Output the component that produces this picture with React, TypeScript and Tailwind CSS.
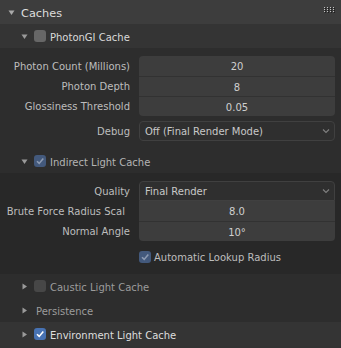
import React from 'react';

type Check = 'off' | 'dim' | 'on' | 'dark';

const Tri = ({ open, className = '' }: { open: boolean; className?: string }) => (
  <svg width="7" height="7" viewBox="0 0 7 7" className={className}>
    {open ? <path d="M0.5 1.5 L6.5 1.5 L3.5 6 Z" fill="currentColor" /> : <path d="M1.5 0.5 L6 3.5 L1.5 6.5 Z" fill="currentColor" />}
  </svg>
);

const Box = ({ state }: { state: Check }) => {
  const bg = {
    off: 'bg-[#676767]',
    dim: 'bg-[#43597c]',
    on: 'bg-[#4772b3]',
    dark: 'bg-[#474747]',
  }[state];
  return (
    <div className={`w-[12px] h-[12px] rounded-[3px] flex items-center justify-center ${bg}`}>
      {(state === 'dim' || state === 'on') && (
        <svg width="10" height="10" viewBox="0 0 10 10">
          <path d="M2 5.2 L4.2 7.4 L8.3 2.6" fill="none" stroke={state === 'on' ? '#ffffff' : '#8d9bb2'} strokeWidth="1.6" />
        </svg>
      )}
    </div>
  );
};

const SubHeader = ({ open, check, label, bg, text }: { open: boolean; check?: Check; label: string; bg: string; text: string }) => (
  <div className={`h-[24px] flex items-center pl-[21px] ${bg}`}>
    <Tri open={open} className="text-[#9a9a9a]" />
    {check ? (
      <>
        <div className="ml-[6px]"><Box state={check} /></div>
        <span className={`ml-[4px] pt-[3px] ${text}`}>{label}</span>
      </>
    ) : (
      <span className={`ml-[8px] pt-[3px] ${text}`}>{label}</span>
    )}
  </div>
);

const Label = ({ children, pr = 'pr-0' }: { children: React.ReactNode; pr?: string }) => (
  <div className={`w-[130px] shrink-0 pt-[2px] text-right text-[#bdbdbd] whitespace-nowrap ${pr}`}>{children}</div>
);

const NumStack = ({ rows, first = true }: { rows: [string, string, string?][]; first?: boolean }) => (
  <div className="flex flex-col">
    {rows.map(([label, value, pr], i) => (
      <div key={label} className="flex items-center h-[20px]">
        <Label pr={pr}>{label}</Label>
        <div
          className={`ml-[9px] w-[196px] h-[20px] pt-[2px] bg-[#3d3d3d] flex items-center justify-center text-[#cfcfcf] ${
            i > 0 ? 'border-t border-[#323232]' : ''
          } ${i === 0 && first ? 'rounded-t-[4px]' : ''} ${i === rows.length - 1 ? 'rounded-b-[4px]' : ''}`}
        >
          {value}
        </div>
      </div>
    ))}
  </div>
);

const Dropdown = ({ label, value, rounded }: { label: string; value: string; rounded: string }) => (
  <div className="flex items-center h-[20px]">
    <Label>{label}</Label>
    <div className={`ml-[9px] w-[196px] h-[20px] border border-[#404040] bg-[#2f2f2f] flex items-center pl-[5px] pr-[4px] text-[#c8c8c8] ${rounded}`}>
      <span className="flex-1 pt-[2px]">{value}</span>
      <svg width="8" height="6" viewBox="0 0 8 6">
        <path d="M1 1.5 L4 4.5 L7 1.5" fill="none" stroke="#808080" strokeWidth="1.1" />
      </svg>
    </div>
  </div>
);

const Grip = () => (
  <svg width="12" height="8" viewBox="0 0 12 8">
    {[0, 1, 2].map((r) =>
      [0, 1, 2, 3].map((c) => (
        <g key={`${r}-${c}`}>
          <rect x={c * 3 + 1} y={r * 2 + 1} width="1" height="1" fill="#1e1e1e" />
          <rect x={c * 3} y={r * 2} width="1" height="1" fill="#c4c4c4" />
        </g>
      ))
    )}
  </svg>
);

export default function App() {
  return (
    <div className="w-[341px] h-[348px] overflow-hidden bg-[#333333] font-['DejaVu_Sans',sans-serif] text-[10px] leading-none">
      {/* Caches panel header */}
      <div className="h-[24px] bg-[#3d3d3d] flex items-center pl-[8px] pr-[5px]">
        <Tri open className="text-[#a9a9a9]" />
        <span className="ml-[6px] pt-[3px] text-[11.3px] text-[#dedede]">Caches</span>
        <div className="ml-auto mb-[2px]">
          <Grip />
        </div>
      </div>

      <SubHeader open check="off" label="PhotonGI Cache" bg="bg-[#343434]" text="text-[#dadada]" />

      {/* PhotonGI content */}
      <div className="bg-[#2d2d2d] pt-[8px]">
        <NumStack
          rows={[
            ['Photon Count (Millions)', '20'],
            ['Photon Depth', '8'],
            ['Glossiness Threshold', '0.05'],
          ]}
        />
        <div className="mt-[5px]">
          <Dropdown label="Debug" value="Off (Final Render Mode)" rounded="rounded-[4px]" />
        </div>
        <div className="mt-[8px]">
          <SubHeader open check="dim" label="Indirect Light Cache" bg="bg-[#2d2d2d]" text="text-[#b4b4b4]" />
        </div>

        {/* Indirect content */}
        <div className="bg-[#282828] pt-[8px] pb-[7px]">
          <Dropdown label="Quality" value="Final Render" rounded="rounded-t-[4px]" />
          <NumStack
            first={false}
            rows={[
              ['Brute Force Radius Scal', '8.0', 'pr-[5px]'],
              ['Normal Angle', '10°'],
            ]}
          />
          <div className="flex items-center h-[20px] mt-[6px] pl-[139px]">
            <Box state="dim" />
            <span className="ml-[3px] pt-[2px] text-[#bdbdbd]">Automatic Lookup Radius</span>
          </div>
        </div>

        <SubHeader open={false} check="dark" label="Caustic Light Cache" bg="bg-[#2d2d2d]" text="text-[#9c9c9c]" />
        <SubHeader open={false} label="Persistence" bg="bg-[#2d2d2d]" text="text-[#9c9c9c]" />
      </div>

      <SubHeader open={false} check="on" label="Environment Light Cache" bg="bg-[#343434]" text="text-[#dedede]" />
    </div>
  );
}
